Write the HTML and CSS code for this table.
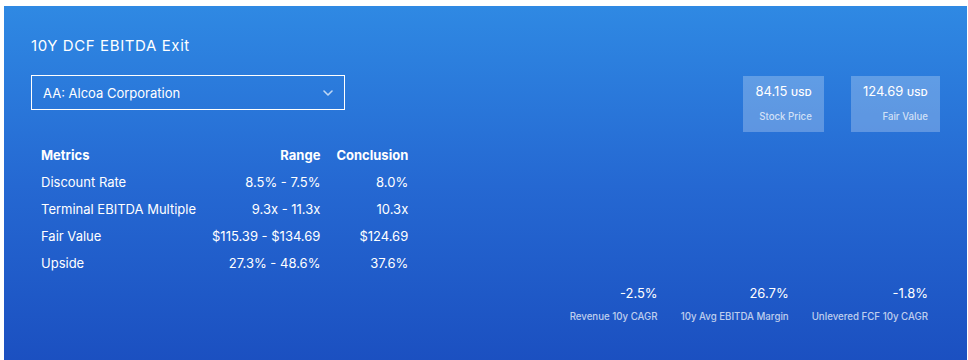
FILE: index.html
```html
<!DOCTYPE html>
<html lang="en">
<head>
<meta charset="utf-8">
<title>10Y DCF EBITDA Exit</title>
<link rel="stylesheet" href="styles.css">
</head>
<body>
<section class="card">
  <h1 class="title">10Y DCF EBITDA Exit</h1>
  <div class="top">
    <div class="select">
      <span class="select-text">AA: Alcoa Corporation</span>
      <svg class="chev" width="10" height="6" viewBox="0 0 10 6"><path d="M1 1 L5 5 L9 1" fill="none" stroke="currentColor" stroke-width="1.6" stroke-linecap="round" stroke-linejoin="round"/></svg>
    </div>
    <div class="boxes">
      <div class="box">
        <div class="box-val">84.15 <span class="unit">USD</span></div>
        <div class="box-lbl">Stock Price</div>
      </div>
      <div class="box">
        <div class="box-val">124.69 <span class="unit">USD</span></div>
        <div class="box-lbl">Fair Value</div>
      </div>
    </div>
  </div>
  <table class="metrics">
    <thead>
      <tr><th class="c1">Metrics</th><th class="c2">Range</th><th class="c3">Conclusion</th></tr>
    </thead>
    <tbody>
      <tr><td class="c1">Discount Rate</td><td class="c2">8.5% - 7.5%</td><td class="c3">8.0%</td></tr>
      <tr><td class="c1">Terminal EBITDA Multiple</td><td class="c2">9.3x - 11.3x</td><td class="c3">10.3x</td></tr>
      <tr><td class="c1">Fair Value</td><td class="c2">$115.39 - $134.69</td><td class="c3">$124.69</td></tr>
      <tr><td class="c1">Upside</td><td class="c2">27.3% - 48.6%</td><td class="c3">37.6%</td></tr>
    </tbody>
  </table>
  <div class="stats">
    <div class="stat"><div class="stat-val">-2.5%</div><div class="stat-lbl">Revenue 10y CAGR</div></div>
    <div class="stat"><div class="stat-val">26.7%</div><div class="stat-lbl">10y Avg EBITDA Margin</div></div>
    <div class="stat"><div class="stat-val">-1.8%</div><div class="stat-lbl">Unlevered FCF 10y CAGR</div></div>
  </div>
</section>
</body>
</html>
```
FILE: styles.css
```css
html, body {
  margin: 0;
  padding: 0;
  background: #ffffff;
}
body {
  padding: 6px 1px 0 4px;
  font-family: Inter, "Open Sans", sans-serif;
  color: #ffffff;
}
.card {
  height: 360px;
  box-sizing: border-box;
  padding: 30px 27px 0 27px;
  background: linear-gradient(180deg, #2f89e3 0%, #2568d2 50%, #1b4fc0 100%);
}
.title {
  margin: 0;
  font-size: 15px;
  font-weight: 400;
  line-height: 20px;
  letter-spacing: 0.6px;
}
.top {
  display: flex;
  justify-content: space-between;
  align-items: flex-start;
  margin-top: 19px;
}
.select {
  width: 314px;
  height: 35px;
  box-sizing: border-box;
  border: 1px solid #ffffff;
  display: flex;
  align-items: center;
  justify-content: space-between;
  padding: 0 11px 0 11px;
}
.select-text {
  font-size: 13px;
}
.chev {
  color: rgba(255,255,255,0.7);
}
.boxes {
  display: flex;
  gap: 27px;
  margin-top: 1px;
}
.box {
  background: rgba(255,255,255,0.25);
  height: 56px;
  box-sizing: border-box;
  padding: 6px 12px 0 12px;
  text-align: right;
}
.box-val {
  font-size: 13px;
  line-height: 18px;
}
.unit {
  font-size: 9.5px;
  font-weight: 600;
  letter-spacing: 0.3px;
}
.box-lbl {
  margin-top: 9px;
  font-size: 9.7px;
  font-weight: 500;
  line-height: 12px;
  color: rgba(255,255,255,0.72);
}
.metrics {
  border-collapse: collapse;
  margin-top: 9px;
  margin-left: 10px;
  font-size: 13px;
}
.metrics th, .metrics td {
  padding: 0;
  height: 27px;
  white-space: nowrap;
}
.metrics th {
  font-weight: 700;
}
.c1 { text-align: left; width: 171px; }
.c2 { text-align: right; }
.c3 { text-align: right; padding-left: 16px !important; }
.stats {
  display: flex;
  justify-content: flex-end;
  gap: 23px;
  margin-top: 8px;
  padding-right: 12px;
}
.stat {
  text-align: right;
}
.stat-val {
  font-size: 13px;
  line-height: 18px;
}
.stat-lbl {
  margin-top: 9px;
  font-size: 9.7px;
  font-weight: 500;
  line-height: 12px;
  color: rgba(255,255,255,0.72);
}
```
